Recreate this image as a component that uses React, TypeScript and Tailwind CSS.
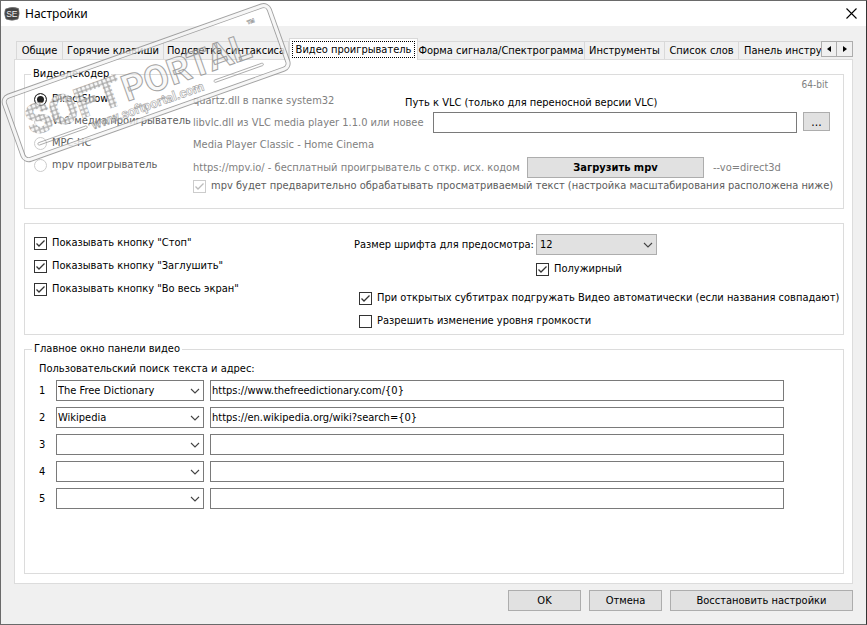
import { useId, useState } from "react";
import type { ReactNode } from "react";

const tabs = [
  { name: "Общие", width: "w-[47px] border-l" },
  { name: "Горячие клавиши", width: "w-[101px]" },
  { name: "Подсветка синтаксиса", width: "w-[125px]" },
  { name: "Видео проигрыватель", width: "w-[129px]" },
  { name: "Форма сигнала/Спектрограмма", width: "w-[167px]" },
  { name: "Инструменты", width: "w-[80px]" },
  { name: "Список слов", width: "w-[74px]" },
  { name: "Панель инстру", width: "min-w-0 flex-1 border-r-0 pl-[5px] text-left" },
];

const players = ["DirectShow", "VLC медиа проигрыватель", "MPC-HC", "mpv проигрыватель"];

const searches = [
  { name: "The Free Dictionary", url: "https://www.thefreedictionary.com/{0}" },
  { name: "Wikipedia", url: "https://en.wikipedia.org/wiki?search={0}" },
  { name: "", url: "" },
  { name: "", url: "" },
  { name: "", url: "" },
];

function Check({ children, checked, disabled }: { children: ReactNode; checked?: boolean; disabled?: boolean }) {
  return (
    <label className={`flex h-[14px] items-center gap-[5px] whitespace-nowrap ${disabled ? "text-[#5c5c5c]" : ""}`}>
      <span className="grid size-[13px] shrink-0">
        <input
          type="checkbox"
          defaultChecked={checked}
          disabled={disabled}
          className="peer col-start-1 row-start-1 size-[13px] appearance-none border border-[#333] bg-white disabled:border-[#ccc]"
        />
        <svg
          viewBox="0 0 13 13"
          className="pointer-events-none invisible col-start-1 row-start-1 size-[13px] fill-none stroke-[#333] peer-checked:visible peer-disabled:stroke-[#bbb]"
        >
          <path d="M2.5 6.5 L5 9 L10.5 3.5" strokeWidth="1.3" />
        </svg>
      </span>
      {children}
    </label>
  );
}

function Combo({ value, label, id, className }: { value: string; label?: string; id?: string; className: string }) {
  return (
    <span className={`grid shrink-0 ${className}`}>
      <select
        id={id}
        aria-label={label}
        className="col-start-1 row-start-1 h-full w-full appearance-none bg-transparent pr-5 outline-none"
      >
        <option>{value}</option>
      </select>
      <svg
        viewBox="0 0 10 6"
        className="pointer-events-none col-start-1 row-start-1 mr-[3px] h-[6px] w-[10px] self-center justify-self-end fill-none stroke-[#444]"
      >
        <path d="M1 1 L5 5 L9 1" strokeWidth="1.1" />
      </svg>
    </span>
  );
}

function Button({ children, className }: { children: ReactNode; className: string }) {
  return (
    <button type="button" className={`shrink-0 border border-[#adadad] bg-[#e1e1e1] whitespace-nowrap ${className}`}>
      {children}
    </button>
  );
}

function Stamp() {
  return (
    <svg viewBox="0 0 300 170" className="pointer-events-none absolute top-0 left-0 z-20 h-[170px] w-[300px]" aria-hidden="true">
      <defs>
        <pattern id="cells" width="4.4" height="4.4" patternUnits="userSpaceOnUse">
          <rect width="4.4" height="4.4" fill="#8c8c8c" />
          <rect x="0.6" y="0.6" width="3.2" height="3.2" fill="#f4f4f4" />
        </pattern>
      </defs>
      <g transform="translate(-1 96) rotate(-19.6)" opacity="0.8">
        <rect x="2" y="2" width="281" height="67" rx="6" fill="none" stroke="#8c8c8c" strokeWidth="5" />
        <rect x="2" y="2" width="281" height="67" rx="6" fill="none" stroke="#f6f6f6" strokeWidth="3.2" />
        <g fontFamily="Roboto, 'Liberation Sans', sans-serif" fontWeight="700">
          <text x="17" y="47" fontSize="40" fill="url(#cells)" fillOpacity="0.85" stroke="url(#cells)" strokeWidth="2">SOFT</text>
          <text x="118" y="47" fontSize="36" fill="#f2f2f2" fillOpacity="0.5" stroke="#8c8c8c" strokeWidth="1">PORTAL</text>
          <text x="77" y="62" fontSize="13" fill="#fff" fillOpacity="0.8" stroke="#8c8c8c" strokeWidth="0.6">www.softportal.com</text>
          <text x="257" y="21" fontSize="14" fill="#fff" stroke="#8c8c8c" strokeWidth="0.6">™</text>
        </g>
        <g fill="none" stroke="#8c8c8c" strokeWidth="0.8">
          <rect x="20" y="56" width="52" height="2.5" rx="1" />
          <rect x="207" y="56" width="52" height="2.5" rx="1" />
        </g>
      </g>
    </svg>
  );
}

export default function App() {
  const [player, setPlayer] = useState(players[0]);
  const fontSizeId = useId();
  const pathId = useId();

  return (
    <main className="relative flex min-h-screen flex-col border border-[#6a6a6a] border-r-[#333] bg-[#f0f0f0] font-['DejaVu_Sans_Condensed','DejaVu_Sans',sans-serif] text-[11px] leading-[14px] text-black">
      <header className="flex h-[25px] items-center justify-between bg-white pr-[9px] pl-[3px]">
        <h1 className="flex items-center gap-[5px] font-['Noto_Sans',sans-serif] text-[12px]">
          <svg viewBox="0 0 16 14" className="h-[14px] w-4">
            <path d="M1.5 2 Q8 -1 14.5 1.5 Q16 7 14 12 Q8 14.5 2 12 Q-.5 7 1.5 2Z" fill="#444" stroke="#777" strokeWidth="0.7" />
            <text x="2.2" y="9.8" fontSize="8.5" fill="#eee" fontFamily="'Liberation Sans', sans-serif">SE</text>
          </svg>
          Настройки
        </h1>
        <button type="button" aria-label="Закрыть">
          <svg viewBox="0 0 11 11" className="size-[11px] fill-none stroke-black">
            <path d="M0.5 0.5 L10.5 10.5 M10.5 0.5 L0.5 10.5" strokeWidth="1.1" />
          </svg>
        </button>
      </header>

      <div className="flex flex-1 flex-col px-[13px] pt-3">
        <div className="relative z-10 flex h-[22px] pl-[2px]">
          <div role="tablist" className="flex min-w-0 flex-1 items-end overflow-hidden">
            {tabs.map((tab) => {
              const active = tab.name === "Видео проигрыватель";
              return (
                <button
                  key={tab.name}
                  type="button"
                  role="tab"
                  aria-selected={active}
                  className={`shrink-0 border-t border-r border-[#d9d9d9] whitespace-nowrap ${tab.width} ${
                    active ? "h-[22px] border-l bg-white p-[2px]" : "mb-px h-[18px] pt-px"
                  }`}
                >
                  {active ? (
                    <span className="flex h-[17px] items-center justify-center border border-dotted border-black">{tab.name}</span>
                  ) : (
                    tab.name
                  )}
                </button>
              );
            })}
          </div>
          <div className="mt-[3px] flex h-4">
            <button type="button" aria-label="Назад" className="grid w-4 place-items-center border border-[#adadad]">
              <svg viewBox="0 0 4 6" className="h-[6px] w-1"><path d="M4 0 L0 3 L4 6Z" /></svg>
            </button>
            <button type="button" aria-label="Вперёд" className="grid w-4 place-items-center border border-l-0 border-[#adadad]">
              <svg viewBox="0 0 4 6" className="h-[6px] w-1"><path d="M0 0 L4 3 L0 6Z" /></svg>
            </button>
          </div>
        </div>

        <section className="-mt-px flex flex-1 flex-col border border-[#dcdcdc] bg-white pr-2 pb-[9px] pl-[9px]">
          <fieldset className="mt-[7px] h-[142px] border border-[#dcdcdc] pl-[9px]">
            <legend className="ml-[-3px] px-[2px]">Видеодекодер</legend>
            <div className="flex">
              <div className="mt-[11px] flex w-[159px] shrink-0 flex-col gap-2">
                {players.map((name) => (
                  <label
                    key={name}
                    className={`flex h-[14px] items-center gap-[5px] whitespace-nowrap ${name === players[0] ? "" : "text-[#5c5c5c]"}`}
                  >
                    <input
                      type="radio"
                      name="player"
                      checked={player === name}
                      onChange={() => setPlayer(name)}
                      disabled={name !== players[0]}
                      className="size-[13px] shrink-0 appearance-none rounded-full border border-[#333] bg-white checked:bg-[#222] checked:shadow-[inset_0_0_0_2px_white] disabled:border-[#ccc]"
                    />
                    {name}
                  </label>
                ))}
              </div>
              <div className="min-w-0 flex-1 text-[#808080]">
                <div className="flex">
                  <div className="mt-[13px] flex w-[212px] shrink-0 flex-col gap-2 whitespace-nowrap">
                    <p>quartz.dll в папке system32</p>
                    <p>libvlc.dll из VLC media player 1.1.0 или новее</p>
                    <p>Media Player Classic - Home Cinema</p>
                  </div>
                  <div className="min-w-0 flex-1 pr-[13px]">
                    <p className="mt-[-3px] pr-[2px] text-right text-[10px]">64-bit</p>
                    <label htmlFor={pathId} className="mt-1 block text-black">
                      Путь к VLC (только для переносной версии VLC)
                    </label>
                    <div className="mt-[2px] flex items-start gap-[6px] pl-7">
                      <input id={pathId} className="h-[21px] min-w-0 flex-1 border border-[#7a7a7a] px-[2px] text-black" />
                      <Button className="h-[19px] w-[27px] text-[12px] text-black">...</Button>
                    </div>
                  </div>
                </div>
                <div className="mt-[5px] mb-px flex items-center whitespace-nowrap">
                  <p className="w-[334px] shrink-0">https://mpv.io/ - бесплатный проигрыватель с откр. исх. кодом</p>
                  <Button className="h-[21px] w-[177px] font-bold text-black">Загрузить mpv</Button>
                  <p className="ml-[9px]">--vo=direct3d</p>
                </div>
                <Check checked disabled>
                  mpv будет предварительно обрабатывать просматриваемый текст (настройка масштабирования расположена ниже)
                </Check>
              </div>
            </div>
          </fieldset>

          <div className="mt-[14px] flex h-[112px] border border-[#dcdcdc] pt-3 pl-[9px]">
            <div className="flex w-[320px] shrink-0 flex-col gap-[9px]">
              <Check checked>Показывать кнопку "Стоп"</Check>
              <Check checked>Показывать кнопку "Заглушить"</Check>
              <Check checked>Показывать кнопку "Во весь экран"</Check>
            </div>
            <div className="mt-[-2px]">
              <div className="flex items-center">
                <label htmlFor={fontSizeId} className="w-[182px] whitespace-nowrap">
                  Размер шрифта для предосмотра:
                </label>
                <Combo id={fontSizeId} value="12" className="h-[21px] w-[121px] border border-[#adadad] bg-[#e1e1e1] pl-[3px]" />
              </div>
              <div className="mt-[7px] pl-[182px]">
                <Check checked>Полужирный</Check>
              </div>
              <div className="mt-[15px] flex flex-col gap-[9px] pl-[5px]">
                <Check checked>При открытых субтитрах подгружать Видео автоматически (если названия совпадают)</Check>
                <Check>Разрешить изменение уровня громкости</Check>
              </div>
            </div>
          </div>

          <fieldset className="mt-[7px] flex-1 border border-[#dcdcdc] pl-[14px]">
            <legend className="ml-[-7px] px-[2px]">Главное окно панели видео</legend>
            <p className="mt-[6px]">Пользовательский поиск текста и адрес:</p>
            <div className="mt-1 flex flex-col gap-[6px] pr-[59px]">
              {searches.map((row, i) => (
                <div key={i} className="flex items-center">
                  <span className="w-[17px]">{i + 1}</span>
                  <Combo value={row.name} label={`Название ${i + 1}`} className="h-[21px] w-[148px] border border-[#7a7a7a] pl-px" />
                  <input
                    aria-label={`Адрес ${i + 1}`}
                    defaultValue={row.url}
                    className="ml-[6px] h-[21px] min-w-0 flex-1 border border-[#7a7a7a] px-px"
                  />
                </div>
              ))}
            </div>
          </fieldset>
        </section>
      </div>

      <footer className="flex justify-end gap-2 pt-[6px] pr-[13px] pb-[13px]">
        <Button className="h-[21px] w-[73px]">OK</Button>
        <Button className="h-[21px] w-[73px]">Отмена</Button>
        <Button className="h-[21px] w-[183px]">Восстановить настройки</Button>
      </footer>
      <Stamp />
    </main>
  );
}
